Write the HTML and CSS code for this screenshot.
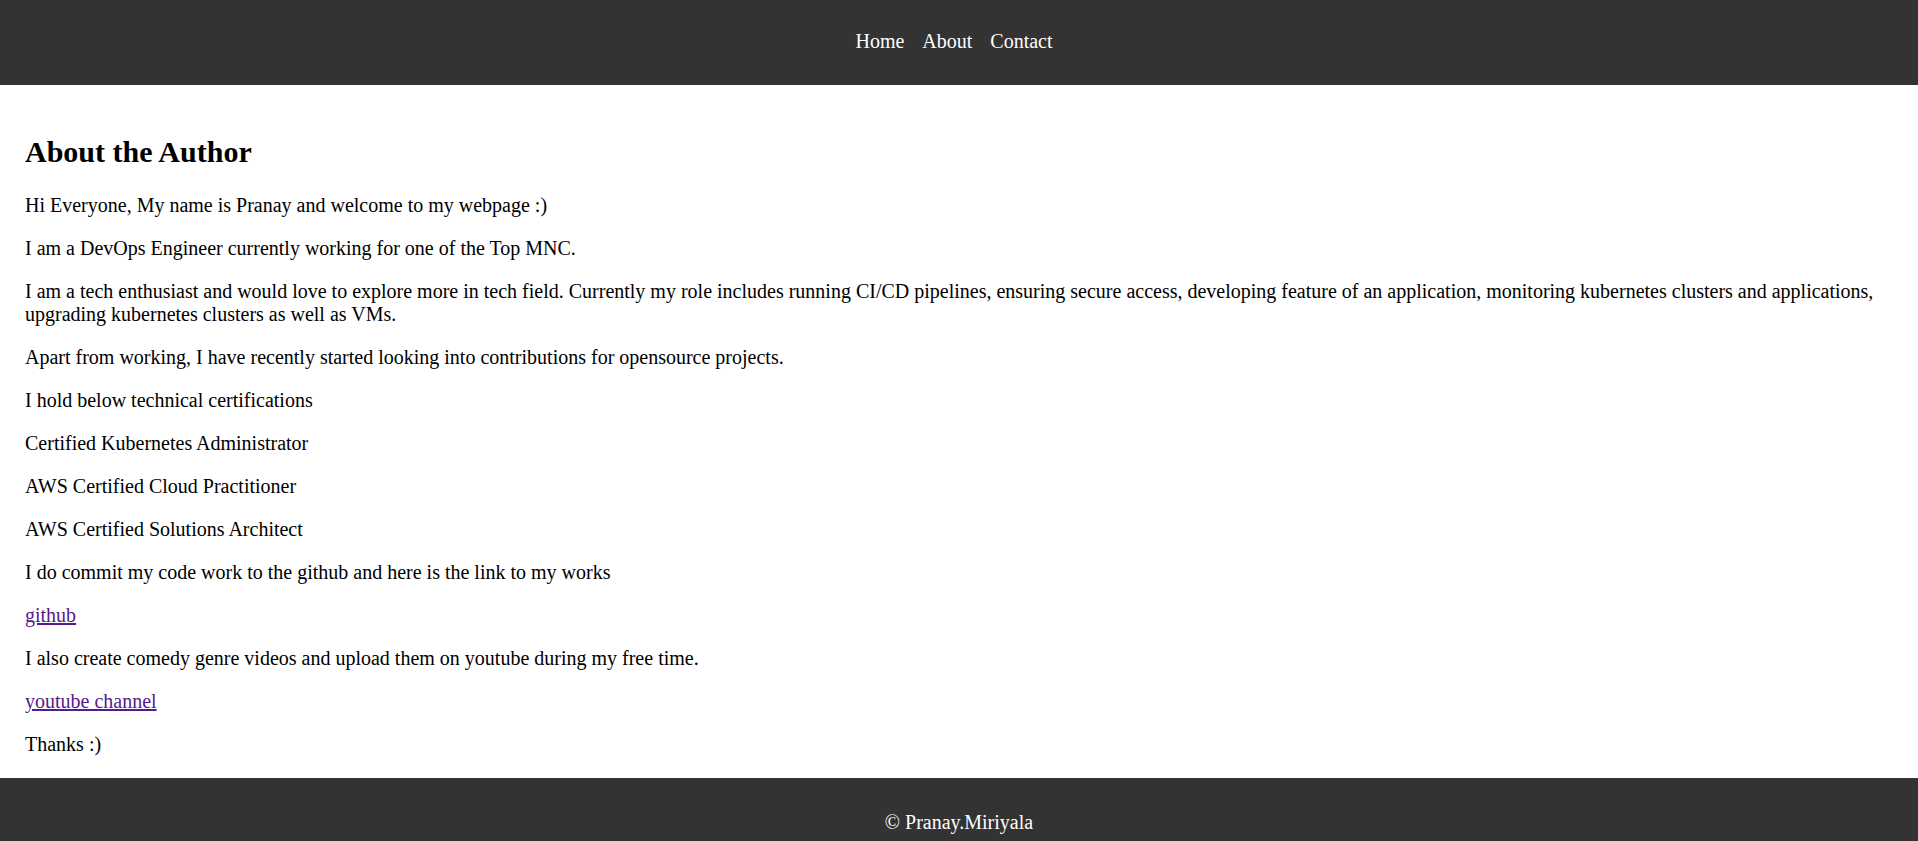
FILE: index.html
```html
<!DOCTYPE html>
<html lang="en">
<head>
<meta charset="utf-8">
<title>About the Author</title>
<link rel="stylesheet" href="styles.css">
</head>
<body>
<header class="site-header">
  <nav class="nav">
    <a class="nav-link" href="#">Home</a>
    <a class="nav-link" href="#">About</a>
    <a class="nav-link" href="#">Contact</a>
  </nav>
</header>
<main class="content">
  <h2 class="title">About the Author</h2>
  <p>Hi Everyone, My name is Pranay and welcome to my webpage :)</p>
  <p>I am a DevOps Engineer currently working for one of the Top MNC.</p>
  <p>I am a tech enthusiast and would love to explore more in tech field. Currently my role includes running CI/CD pipelines, ensuring secure access, developing feature of an application, monitoring kubernetes clusters and applications, upgrading kubernetes clusters as well as VMs.</p>
  <p>Apart from working, I have recently started looking into contributions for opensource projects.</p>
  <p>I hold below technical certifications</p>
  <p>Certified Kubernetes Administrator</p>
  <p>AWS Certified Cloud Practitioner</p>
  <p>AWS Certified Solutions Architect</p>
  <p>I do commit my code work to the github and here is the link to my works</p>
  <p><a class="link" href="#">github</a></p>
  <p>I also create comedy genre videos and upload them on youtube during my free time.</p>
  <p><a class="link" href="#">youtube channel</a></p>
  <p>Thanks :)</p>
</main>
<footer class="site-footer">
  <p class="copy">&copy; Pranay.Miriyala</p>
</footer>
</body>
</html>
```

FILE: styles.css
```css
html, body {
  margin: 0;
  padding: 0;
}

body {
  font-family: "Liberation Serif", "Times New Roman", serif;
  font-size: 20px;
  color: #000;
  background: #fff;
}

.site-header {
  background: #333333;
  height: 85px;
  box-sizing: border-box;
  padding-top: 30px;
}

.nav {
  display: flex;
  justify-content: center;
  gap: 18px;
  padding-right: 10px;
  line-height: normal;
}

.nav-link {
  color: #fff;
  text-decoration: none;
}

.content {
  padding: 25px 25px 2px 25px;
}

.title {
  font-size: 30px;
  font-weight: bold;
  margin: 25px 0;
}

.content p {
  margin: 20px 0;
}

.link {
  color: #551a8b;
  text-decoration: underline;
}

.site-footer {
  background: #333333;
  color: #fff;
  text-align: center;
  padding: 33px 0;
}

.copy {
  margin: 0;
}
```
